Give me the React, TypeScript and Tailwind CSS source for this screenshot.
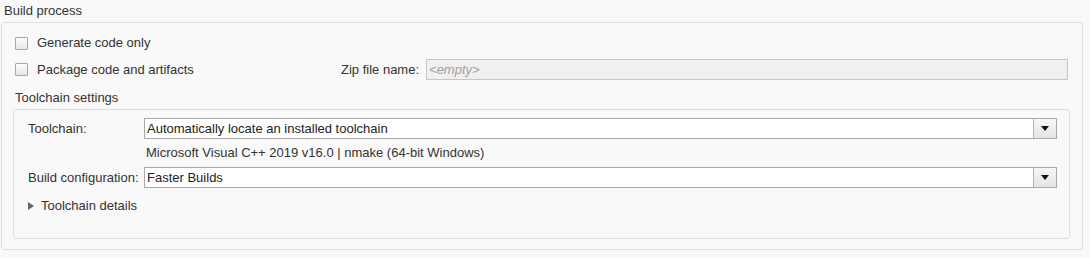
import React from "react";

function Checkbox() {
  return (
    <span className="inline-block w-[13px] h-[13px] border border-[#a8a8a8] bg-gradient-to-b from-[#fdfdfd] to-[#e6e6e6] rounded-[1px] shrink-0" />
  );
}

function Dropdown({ value }: { value: string }) {
  return (
    <div className="flex-1 flex h-[21px] border border-[#a9a9a9] bg-white">
      <div className="flex-1 pl-[2px] leading-[19px] text-[#222]">{value}</div>
      <div className="w-[23px] border-l border-[#b4b4b4] bg-gradient-to-b from-[#f7f7f7] to-[#e4e4e4] flex items-center justify-center">
        <svg width="8" height="5" viewBox="0 0 8 5">
          <path d="M0 0 L8 0 L4 5 Z" fill="#111" />
        </svg>
      </div>
    </div>
  );
}

export default function App() {
  return (
    <div
      className="w-[1090px] h-[258px] bg-[#f9f9f9] text-[13px] text-[#333] overflow-hidden"
      style={{ fontFamily: '"Liberation Sans", Arial, sans-serif' }}
    >
      <div className="h-[22px] pl-[4px] pt-[3px] leading-[16px]">Build process</div>
      <div className="ml-[1px] w-[1082px] h-[228px] border border-[#dedede] rounded-[3px] pl-[11px] pr-[12px] pt-[10px]">
        <div className="flex items-center h-[20px] pl-[2px]">
          <Checkbox />
          <span className="ml-[9px]">Generate code only</span>
        </div>
        <div className="flex items-center h-[21px] mt-[6px] pl-[2px] pr-[2px]">
          <div className="w-[326px] flex items-center">
            <Checkbox />
            <span className="ml-[9px]">Package code and artifacts</span>
          </div>
          <span>Zip file name:</span>
          <div className="ml-[7px] flex-1 h-[21px] border border-[#c6c6c6] bg-[#f0f0f0] pl-[2px] leading-[19px] italic text-[#a0a0a0]">
            &lt;empty&gt;
          </div>
        </div>
        <div className="pt-[10px] pl-[2px] h-[25px] leading-[15px]">Toolchain settings</div>
        <div className="mt-[4px] h-[130px] border border-[#dedede] rounded-[3px] pl-[14px] pr-[12px] pt-[8px]">
          <div className="flex items-center">
            <div className="w-[116px]">Toolchain:</div>
            <Dropdown value="Automatically locate an installed toolchain" />
          </div>
          <div className="h-[28px] leading-[28px] pl-[118px]">
            Microsoft Visual C++ 2019 v16.0 | nmake (64-bit Windows)
          </div>
          <div className="flex items-center">
            <div className="w-[116px]">Build configuration:</div>
            <Dropdown value="Faster Builds" />
          </div>
          <div className="mt-[7px] h-[22px] flex items-center">
            <svg width="6" height="8" viewBox="0 0 6 8">
              <path d="M0 0 L6 4 L0 8 Z" fill="#666" />
            </svg>
            <span className="ml-[7px]">Toolchain details</span>
          </div>
        </div>
      </div>
    </div>
  );
}
